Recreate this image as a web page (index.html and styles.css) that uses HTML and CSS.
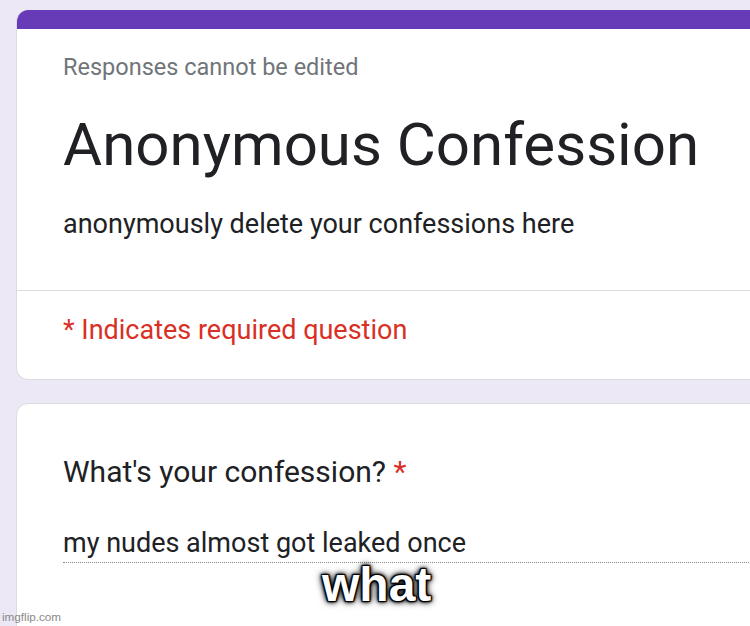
FILE: index.html
```html
<!DOCTYPE html>
<html lang="en">
<head>
<meta charset="utf-8">
<title>Anonymous Confession</title>
<link rel="stylesheet" href="styles.css">
</head>
<body>
<div class="page">
  <section class="card header-card">
    <div class="accent"></div>
    <div class="header-main">
      <p class="notice">Responses cannot be edited</p>
      <h1 class="title">Anonymous Confession</h1>
      <p class="desc">anonymously delete your confessions here</p>
    </div>
    <div class="header-foot">
      <p class="required-note">* Indicates required question</p>
    </div>
  </section>
  <section class="card question-card">
    <h2 class="question">What's your confession? <span class="star">*</span></h2>
    <div class="answer">my nudes almost got leaked once</div>
  </section>
</div>
<div class="caption">what</div>
<div class="watermark">imgflip.com</div>
</body>
</html>
```
FILE: styles.css
```css
html, body {
  margin: 0;
  padding: 0;
}
body {
  width: 750px;
  height: 626px;
  overflow: hidden;
  background: #ece8f6;
  font-family: Roboto, "Noto Sans", Arial, sans-serif;
  color: #202124;
  position: relative;
}
.page {
  padding: 10px 0 0 16px;
  display: flex;
  flex-direction: column;
  gap: 23px;
}
.card {
  width: 800px;
  background: #fff;
  border: 1px solid #dadce0;
  border-radius: 12px;
  box-sizing: border-box;
  overflow: hidden;
}
.header-card {
  border-top: none;
}
.accent {
  height: 19px;
  background: #673ab7;
}
.header-main {
  padding: 24px 46px 0;
  height: 262px;
  box-sizing: border-box;
  border-bottom: 1px solid #dadce0;
}
.notice {
  margin: 0;
  font-size: 23.5px;
  line-height: 28px;
  color: #70757a;
}
.title {
  margin: 28px 0 0;
  font-size: 60px;
  font-weight: 400;
  line-height: 72px;
}
.desc {
  margin: 27px 0 0;
  font-size: 27px;
  line-height: 32px;
}
.header-foot {
  padding: 23px 46px 0;
  height: 88px;
  box-sizing: border-box;
}
.required-note {
  margin: 0;
  font-size: 27px;
  line-height: 32px;
  color: #d93025;
}
.question-card {
  height: 240px;
  padding: 50px 0 0 46px;
}
.question {
  margin: 0;
  font-size: 30px;
  font-weight: 400;
  line-height: 36px;
}
.star {
  color: #d93025;
}
.answer {
  margin-top: 37px;
  padding-bottom: 3px;
  font-size: 27px;
  line-height: 32px;
  border-bottom: 1px dotted #8a8a8a;
}
.caption {
  position: absolute;
  left: 322px;
  top: 557px;
  font-family: "Liberation Sans", Arial, sans-serif;
  font-weight: 700;
  font-size: 48px;
  line-height: 56px;
  color: #fff;
  text-shadow:
    1px 1px 1px #000, -1px -1px 1px #000, 1px -1px 1px #000, -1px 1px 1px #000,
    0 0 3px #000, 0 0 4px #000, 0 0 6px #000, 0 0 8px rgba(0,0,0,0.7);
}
.watermark {
  position: absolute;
  left: 2px;
  top: 610px;
  font-family: "Liberation Sans", Arial, sans-serif;
  font-size: 11.7px;
  line-height: 14px;
  color: #8a8a8a;
}
```
